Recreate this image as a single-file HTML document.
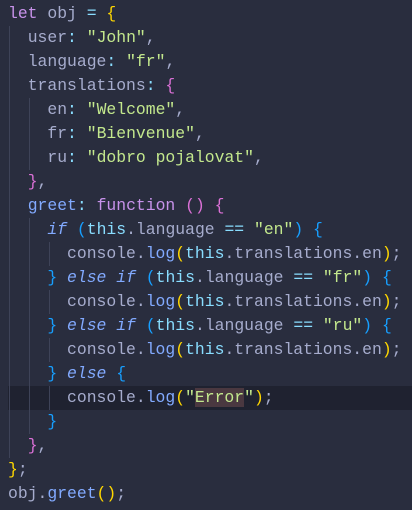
<!DOCTYPE html>
<html><head><meta charset="utf-8"><style>
html,body{margin:0;padding:0;background:#292d3e;width:412px;height:510px;overflow:hidden}
.code{position:absolute;left:8px;top:2px;font-family:"Liberation Mono",monospace;font-size:16.4px;color:#a6accd;z-index:1}
.code div{white-space:pre;height:24px;line-height:24px;overflow:visible}
.k{color:#c792ea}.s{color:#c3e88d}.p{color:#89ddff}.f{color:#82aaff}.i{color:#82aaff;font-style:italic}
.b1{color:#ffd700}.b2{color:#da70d6}.b3{color:#179fff}.t{color:#89ddff}.c{color:#a6accd}
.hl{position:absolute;left:8px;right:0;top:386px;height:24px;background:#1f2230;z-index:0}
.sel{background:#4a3840}
.g{position:absolute;width:1px;background:#3e4358;z-index:0}
</style></head><body>
<div class="hl"></div>
<div class="g" style="left:9px;top:26px;height:432px"></div>
<div class="g" style="left:29px;top:98px;height:72px"></div>
<div class="g" style="left:29px;top:218px;height:216px"></div>
<div class="g" style="left:49px;top:242px;height:24px"></div>
<div class="g" style="left:49px;top:290px;height:24px"></div>
<div class="g" style="left:49px;top:338px;height:24px"></div>
<div class="g" style="left:49px;top:386px;height:24px"></div>
<div class="code">
<div><span class="k">let</span> obj <span class="p">=</span> <span class="b1">{</span></div>
<div>  <span class="c">user</span><span class="p">:</span> <span class="s">"John"</span>,</div>
<div>  <span class="c">language</span><span class="p">:</span> <span class="s">"fr"</span>,</div>
<div>  <span class="c">translations</span><span class="p">:</span> <span class="b2">{</span></div>
<div>    <span class="c">en</span><span class="p">:</span> <span class="s">"Welcome"</span>,</div>
<div>    <span class="c">fr</span><span class="p">:</span> <span class="s">"Bienvenue"</span>,</div>
<div>    <span class="c">ru</span><span class="p">:</span> <span class="s">"dobro pojalovat"</span>,</div>
<div>  <span class="b2">}</span>,</div>
<div>  <span class="f">greet</span><span class="p">:</span> <span class="k">function</span> <span class="b2">()</span> <span class="b2">{</span></div>
<div>    <span class="i">if</span> <span class="b3">(</span><span class="t">this</span>.language <span class="p">==</span> <span class="s">"en"</span><span class="b3">)</span> <span class="b3">{</span></div>
<div>      console.<span class="f">log</span><span class="b1">(</span><span class="t">this</span>.translations.en<span class="b1">)</span>;</div>
<div>    <span class="b3">}</span> <span class="i">else</span> <span class="i">if</span> <span class="b3">(</span><span class="t">this</span>.language <span class="p">==</span> <span class="s">"fr"</span><span class="b3">)</span> <span class="b3">{</span></div>
<div>      console.<span class="f">log</span><span class="b1">(</span><span class="t">this</span>.translations.en<span class="b1">)</span>;</div>
<div>    <span class="b3">}</span> <span class="i">else</span> <span class="i">if</span> <span class="b3">(</span><span class="t">this</span>.language <span class="p">==</span> <span class="s">"ru"</span><span class="b3">)</span> <span class="b3">{</span></div>
<div>      console.<span class="f">log</span><span class="b1">(</span><span class="t">this</span>.translations.en<span class="b1">)</span>;</div>
<div>    <span class="b3">}</span> <span class="i">else</span> <span class="b3">{</span></div>
<div>      console.<span class="f">log</span><span class="b1">(</span><span class="s">"<span class="sel">Error</span>"</span><span class="b1">)</span>;</div>
<div>    <span class="b3">}</span></div>
<div>  <span class="b2">}</span>,</div>
<div><span class="b1">}</span>;</div>
<div>obj.<span class="f">greet</span><span class="b1">()</span>;</div>
</div>
</body></html>
